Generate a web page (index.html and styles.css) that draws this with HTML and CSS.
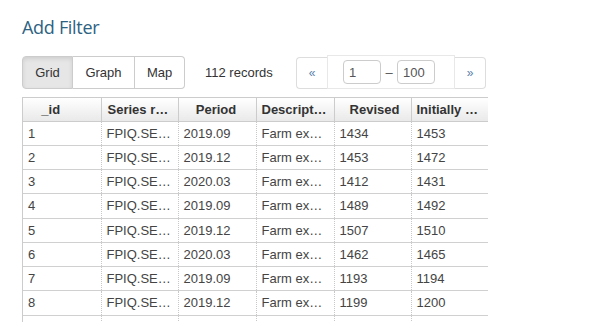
FILE: index.html
```html
<!DOCTYPE html>
<html lang="en">
  <head>
    <meta charset="UTF-8" />
    <meta name="viewport" content="width=device-width, initial-scale=1.0" />
    <link rel="stylesheet" href="styles.css">
    <title>Add Filter</title>
  </head>
  <body>
    <div class="page">
      <h2 class="title">Add Filter</h2>

      <div class="toolbar">
        <div class="btn-group">
          <button class="btn active">Grid</button>
          <button class="btn">Graph</button>
          <button class="btn">Map</button>
        </div>
        <span class="count">112 records</span>
        <div class="pager">
          <button class="pager-btn">&laquo;</button>
          <div class="pager-range">
            <input class="pager-input" value="1" />
            <span class="dash">&ndash;</span>
            <input class="pager-input" value="100" />
          </div>
          <button class="pager-btn">&raquo;</button>
        </div>
      </div>

      <div class="grid">
        <table class="grid-table">
          <colgroup>
            <col style="width: 78px" />
            <col style="width: 77px" />
            <col style="width: 78px" />
            <col style="width: 78px" />
            <col style="width: 77px" />
            <col style="width: 78px" />
          </colgroup>
          <thead>
            <tr>
              <th class="col-id">_id</th>
              <th class="col-series">Series reference</th>
              <th>Period</th>
              <th class="col-desc">Description</th>
              <th class="col-rev">Revised</th>
              <th class="col-init">Initially reported</th>
            </tr>
          </thead>
          <tbody>
            <tr><td>1</td><td>FPIQ.SEC1NT</td><td>2019.09</td><td class="desc">Farm expenditure</td><td>1434</td><td>1453</td></tr>
            <tr><td>2</td><td>FPIQ.SEC1NT</td><td>2019.12</td><td class="desc">Farm expenditure</td><td>1453</td><td>1472</td></tr>
            <tr><td>3</td><td>FPIQ.SEC1NT</td><td>2020.03</td><td class="desc">Farm expenditure</td><td>1412</td><td>1431</td></tr>
            <tr><td>4</td><td>FPIQ.SEC1NT</td><td>2019.09</td><td class="desc">Farm expenditure</td><td>1489</td><td>1492</td></tr>
            <tr><td>5</td><td>FPIQ.SEC1NT</td><td>2019.12</td><td class="desc">Farm expenditure</td><td>1507</td><td>1510</td></tr>
            <tr><td>6</td><td>FPIQ.SEC1NT</td><td>2020.03</td><td class="desc">Farm expenditure</td><td>1462</td><td>1465</td></tr>
            <tr><td>7</td><td>FPIQ.SEC1NT</td><td>2019.09</td><td class="desc">Farm expenditure</td><td>1193</td><td>1194</td></tr>
            <tr><td>8</td><td>FPIQ.SEC1NT</td><td>2019.12</td><td class="desc">Farm expenditure</td><td>1199</td><td>1200</td></tr>
            <tr><td></td><td></td><td></td><td></td><td></td><td></td></tr>
          </tbody>
        </table>
      </div>
    </div>
  </body>
</html>
```

FILE: styles.css
```css
* {
  margin: 0;
  padding: 0;
  box-sizing: border-box;
}

body {
  background: #fff;
  font-family: "Liberation Sans", Arial, sans-serif;
  font-size: 13px;
  color: #333;
  overflow: hidden;
}

.page {
  padding: 14px 0 0 22px;
}

.title {
  font-family: "Open Sans", sans-serif;
  font-weight: 400;
  font-size: 18px;
  line-height: 26px;
  color: #2d6282;
  letter-spacing: -0.3px;
}

.toolbar {
  display: flex;
  align-items: center;
  margin-top: 15px;
  height: 34px;
}

.btn-group {
  display: flex;
  height: 33px;
}

.btn {
  font-family: "Liberation Sans", Arial, sans-serif;
  font-size: 13px;
  color: #333;
  background: #fff;
  border: 1px solid #ccc;
  border-left-width: 0;
  padding: 0 12px;
  height: 33px;
}

.btn:first-child {
  border-left-width: 1px;
  border-radius: 4px 0 0 4px;
  width: 51px;
}

.btn:nth-child(2) {
  width: 62px;
}

.btn:last-child {
  border-radius: 0 4px 4px 0;
  width: 50px;
}

.btn.active {
  background: #e6e6e6;
  box-shadow: inset 0 2px 4px rgba(0, 0, 0, 0.1);
}

.count {
  margin-left: 20px;
  width: 91px;
}

.pager {
  display: flex;
  align-items: center;
  height: 34px;
}

.pager-btn {
  width: 31px;
  height: 32px;
  background: #fff;
  border: 1px solid #ddd;
  color: #5a7fa8;
  font-family: "Liberation Sans", Arial, sans-serif;
  font-size: 12px;
  margin-top: 2px;
}

.pager-btn:first-child {
  border-radius: 4px 0 0 4px;
  border-right: 0;
}

.pager-btn:last-child {
  border-radius: 0 4px 4px 0;
  border-left: 0;
}

.pager-range {
  display: flex;
  align-items: center;
  height: 34px;
  width: 128px;
  padding: 0 0 0 15px;
  border: 1px solid #e8e8e8;
}

.pager-input {
  width: 38px;
  height: 24px;
  border: 1px solid #ccc;
  border-radius: 4px;
  padding: 0 5px;
  font-family: "Liberation Sans", Arial, sans-serif;
  font-size: 13px;
  color: #555;
}

.dash {
  width: 16px;
  text-align: center;
  color: #555;
}

.grid {
  margin-top: 8px;
  width: 466px;
  height: 240px;
  overflow: hidden;
  border-left: 1px solid #ccc;
  border-top: 1px solid #ccc;
}

.grid-table {
  table-layout: fixed;
  border-collapse: collapse;
  width: 466px;
}

.grid-table th,
.grid-table td {
  white-space: nowrap;
  overflow: hidden;
  text-overflow: ellipsis;
}

.grid-table th {
  height: 23px;
  font-weight: bold;
  color: #333;
  text-align: center;
  padding: 0 6px 0 4px;
  background: linear-gradient(#fff, #e9e9e9);
  border-right: 1px solid #ccc;
  border-bottom: 1px solid #ccc;
}

.grid-table th.col-id {
  padding-right: 26px;
}

.grid-table th.col-series {
  padding-left: 6px;
  text-align: left;
}

.grid-table th.col-desc {
  padding: 0 6px 0 5px;
  text-align: left;
}

.grid-table th.col-rev {
  padding-left: 10px;
}

.grid-table th.col-init {
  padding: 0 8px 0 5px;
  text-align: left;
}

.grid-table td {
  height: 24.25px;
  padding: 0 4px 0 5px;
  color: #444;
  border-right: 1px dotted #c8c8c8;
  border-bottom: 1px solid #d0d0d0;
}

.grid-table td.desc {
  padding-right: 9px;
}
```
